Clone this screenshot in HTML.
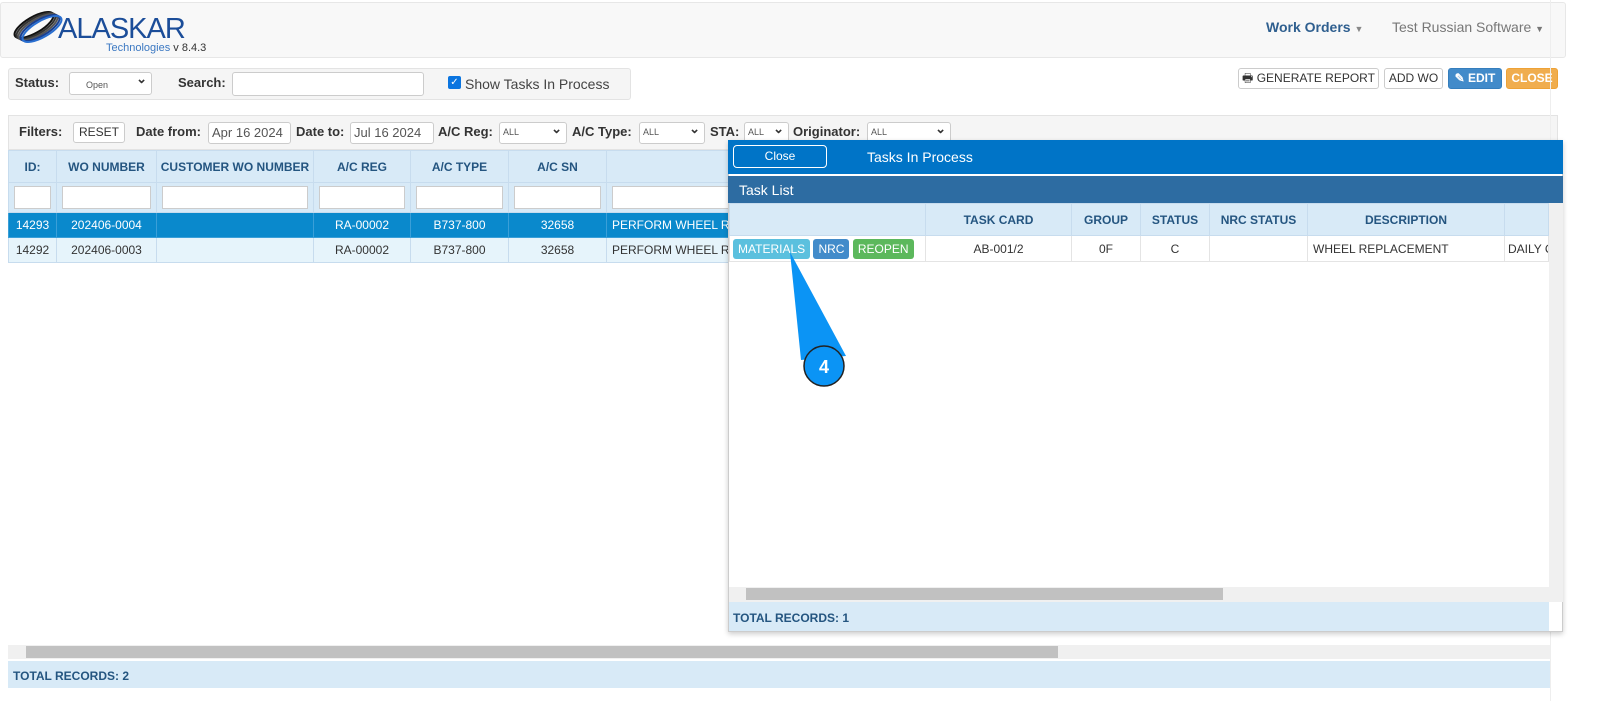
<!DOCTYPE html>
<html><head><meta charset="utf-8"><style>
*{box-sizing:border-box;margin:0;padding:0}
html,body{width:1598px;height:701px;overflow:hidden}
body{background:#fff;font-family:"Liberation Sans",Arial,sans-serif;font-size:12px;color:#333}
#w{position:relative;width:1598px;height:701px;overflow:hidden}
.a{position:absolute}
.nav{left:0;top:2px;width:1566px;height:56px;background:#f8f8f8;border:1px solid #e7e7e7;border-radius:3px}
.btn{position:absolute;top:68px;height:21px;border:1px solid #ccc;border-radius:3px;background:#fff;font-size:12px;line-height:19px;text-align:center;color:#333;white-space:nowrap}
.inp{position:absolute;background:#fff;border:1px solid #ccc;border-radius:3px;white-space:nowrap}
table{border-collapse:collapse;position:absolute;table-layout:fixed}
td,th{border:1px solid #c7dcee;text-align:center;font-size:12px;overflow:hidden;white-space:nowrap}
th{background:#d8eaf7;color:#245580;font-weight:bold;height:32px}
.fr td{background:#d8eaf7;height:30px;padding:3px 5px}
.fr td div{background:#fff;height:23px;border:1px solid #ccc}
.sel td{background:#0a89cc;color:#fff;height:25px;border-color:#3a9fd8}
.r2 td{background:#e6f4fb;height:25px}
.lbl{position:absolute;font-weight:bold;font-size:13px;color:#333;white-space:nowrap}
.sm{position:absolute;background:#fff;border:1px solid #ccc;border-radius:3px;font-size:9px;padding:4px 3px;color:#555;height:20px}
.sm:after{content:"⌄";position:absolute;right:4px;top:-2px;font-size:13px;font-weight:bold;color:#333}
</style></head><body><div id="w">
<div class="a nav"></div>
<svg class="a" style="left:8px;top:8px" width="60" height="40" viewBox="0 0 60 40">
<g fill="none" stroke-width="2">
<ellipse cx="26" cy="17" rx="22" ry="8" transform="rotate(-30 26 17)" stroke="#111"/>
<ellipse cx="28" cy="18" rx="22" ry="8" transform="rotate(-30 28 18)" stroke="#333"/>
<ellipse cx="30" cy="19" rx="22" ry="8" transform="rotate(-30 30 19)" stroke="#555"/>
<ellipse cx="32" cy="20" rx="22" ry="8" transform="rotate(-30 32 20)" stroke="#1a3f8f"/>
<ellipse cx="34" cy="21" rx="22" ry="8" transform="rotate(-30 34 21)" stroke="#2a6fd0"/>
</g></svg>
<div class="a" style="left:58px;top:13px;font-size:29px;color:#1b4d99;letter-spacing:-1px">ALASKAR</div>
<div class="a" style="left:106px;top:42px;font-size:11px;color:#3b78c2;white-space:nowrap">Technologies <span style="color:#333">v 8.4.3</span></div>
<div class="a" style="left:1266px;top:19px;font-size:14px;font-weight:bold;color:#2f5f8f;white-space:nowrap">Work Orders <span style="font-size:9px;color:#888">▼</span></div>
<div class="a" style="left:1392px;top:19px;font-size:14px;color:#777;white-space:nowrap">Test Russian Software <span style="font-size:9px">▼</span></div>

<div class="a" style="left:8px;top:68px;width:623px;height:32px;background:#f5f5f5;border:1px solid #e3e3e3;border-radius:3px"></div>
<div class="lbl" style="left:15px;top:75px">Status:</div>
<div class="sm" style="left:69px;top:72px;width:83px;height:23px;padding:7px 16px;font-size:9px">Open</div>
<div class="lbl" style="left:178px;top:75px">Search:</div>
<div class="inp" style="left:232px;top:72px;width:192px;height:24px"></div>
<div class="a" style="left:448px;top:76px;width:13px;height:13px;background:#0b75e0;border-radius:2px;color:#fff;font-size:10px;line-height:13px;text-align:center">✓</div>
<div class="a" style="left:465px;top:76px;font-size:14px;color:#444;white-space:nowrap">Show Tasks In Process</div>

<div class="btn" style="left:1238px;width:141px">🖶 GENERATE REPORT</div>
<div class="btn" style="left:1384px;width:59px">ADD WO</div>
<div class="btn" style="left:1448px;width:54px;background:#428bca;border-color:#357ebd;color:#fff;font-weight:bold">✎ EDIT</div>
<div class="btn" style="left:1506px;width:52px;background:#f0ad4e;border-color:#eea236;color:#fff;font-weight:bold">CLOSE</div>

<div class="a" style="left:8px;top:115px;width:1550px;height:35px;background:#f5f5f5;border:1px solid #e3e3e3"></div>
<div class="lbl" style="left:19px;top:124px">Filters:</div>
<div class="btn" style="left:73px;top:122px;width:52px;height:21px">RESET</div>
<div class="lbl" style="left:136px;top:124px">Date from:</div>
<div class="inp" style="left:208px;top:122px;width:83px;height:22px;font-size:13px;padding:2px 3px;color:#555;overflow:hidden">Apr 16 2024</div>
<div class="lbl" style="left:296px;top:124px">Date to:</div>
<div class="inp" style="left:350px;top:122px;width:84px;height:22px;font-size:13px;padding:2px 3px;color:#555;overflow:hidden">Jul 16 2024</div>
<div class="lbl" style="left:438px;top:124px">A/C Reg:</div>
<div class="sm" style="left:499px;top:122px;width:68px;height:22px">ALL</div>
<div class="lbl" style="left:572px;top:124px">A/C Type:</div>
<div class="sm" style="left:639px;top:122px;width:66px;height:22px">ALL</div>
<div class="lbl" style="left:710px;top:124px">STA:</div>
<div class="sm" style="left:744px;top:122px;width:45px;height:22px">ALL</div>
<div class="lbl" style="left:793px;top:124px">Originator:</div>
<div class="sm" style="left:867px;top:122px;width:84px;height:22px">ALL</div>

<table style="left:8px;top:150px;width:1550px">
<colgroup><col style="width:48px"><col style="width:100px"><col style="width:157px"><col style="width:97px"><col style="width:98px"><col style="width:98px"><col></colgroup>
<tr><th>ID:</th><th>WO NUMBER</th><th>CUSTOMER WO NUMBER</th><th>A/C REG</th><th>A/C TYPE</th><th>A/C SN</th><th>BASIC</th></tr>
<tr class="fr"><td><div></div></td><td><div></div></td><td><div></div></td><td><div></div></td><td><div></div></td><td><div></div></td><td><div></div></td></tr>
<tr class="sel"><td>14293</td><td>202406-0004</td><td></td><td>RA-00002</td><td>B737-800</td><td>32658</td><td style="text-align:left;padding-left:5px">PERFORM WHEEL R</td></tr>
<tr class="r2"><td>14292</td><td>202406-0003</td><td></td><td>RA-00002</td><td>B737-800</td><td>32658</td><td style="text-align:left;padding-left:5px">PERFORM WHEEL R</td></tr>
</table>
<div class="a" style="left:8px;top:645px;width:1542px;height:14px;background:#f0f0f0"></div>
<div class="a" style="left:26px;top:646px;width:1032px;height:12px;background:#c1c1c1"></div>
<div class="a" style="left:8px;top:661px;width:1542px;height:27px;background:#d8eaf7;font-weight:bold;color:#245580;padding:8px 5px;font-size:12px">TOTAL RECORDS: 2</div>
<div class="a" style="left:1550px;top:0;width:1px;height:701px;background:#eee"></div>

<div class="a" style="left:728px;top:140px;width:835px;height:492px;background:#fff;border:1px solid #ccc;box-shadow:0 2px 5px rgba(0,0,0,.2)"></div>
<div class="a" style="left:728px;top:140px;width:835px;height:34px;background:#0074c7"></div>
<div class="a" style="left:733px;top:145px;width:94px;height:23px;border:1px solid #fff;border-radius:4px;color:#fff;text-align:center;line-height:21px;font-size:12px">Close</div>
<div class="a" style="left:867px;top:149px;color:#fff;font-size:14px;white-space:nowrap">Tasks In Process</div>
<div class="a" style="left:728px;top:176px;width:835px;height:27px;background:#2d6ca2;color:#fff;font-size:14px;padding:6px 11px">Task List</div>
<table style="left:729px;top:203px;width:820px">
<colgroup><col style="width:196px"><col style="width:146px"><col style="width:69px"><col style="width:69px"><col style="width:98px"><col style="width:197px"><col></colgroup>
<tr><th style="height:29px"></th><th>TASK CARD</th><th>GROUP</th><th>STATUS</th><th>NRC STATUS</th><th>DESCRIPTION</th><th></th></tr>
<tr><td style="height:26px;text-align:left;padding:0 3px;border-color:#e4e4e4"><span style="display:inline-block;background:#5bc0de;color:#fff;border-radius:3px;padding:3px 5px;font-size:12px">MATERIALS</span> <span style="display:inline-block;background:#428bca;color:#fff;border-radius:3px;padding:3px 5px">NRC</span> <span style="display:inline-block;background:#5cb85c;color:#fff;border-radius:3px;padding:3px 5px">REOPEN</span></td><td style="border-color:#e4e4e4">AB-001/2</td><td style="border-color:#e4e4e4">0F</td><td style="border-color:#e4e4e4">C</td><td style="border-color:#e4e4e4"></td><td style="text-align:left;padding-left:5px;border-color:#e4e4e4">WHEEL REPLACEMENT</td><td style="text-align:left;padding-left:3px;border-color:#e4e4e4">DAILY C</td></tr>
</table>
<div class="a" style="left:1549px;top:203px;width:14px;height:399px;background:#f0f0f0"></div>
<div class="a" style="left:729px;top:587px;width:820px;height:15px;background:#f0f0f0"></div>
<div class="a" style="left:746px;top:588px;width:477px;height:12px;background:#c1c1c1"></div>
<div class="a" style="left:729px;top:602px;width:820px;height:29px;background:#d8eaf7;font-weight:bold;color:#245580;padding:9px 4px">TOTAL RECORDS: 1</div>

<svg class="a" style="left:0;top:0" width="1598" height="701">
<polygon points="790,252 801,360 846,356" fill="#0b94f5"/>
<circle cx="824" cy="366" r="20" fill="#0b94f5" stroke="#222" stroke-width="1.5"/>
<text x="824" y="373" text-anchor="middle" fill="#fff" font-family="Liberation Sans,sans-serif" font-weight="bold" font-size="18">4</text>
</svg>
</div></body></html>
